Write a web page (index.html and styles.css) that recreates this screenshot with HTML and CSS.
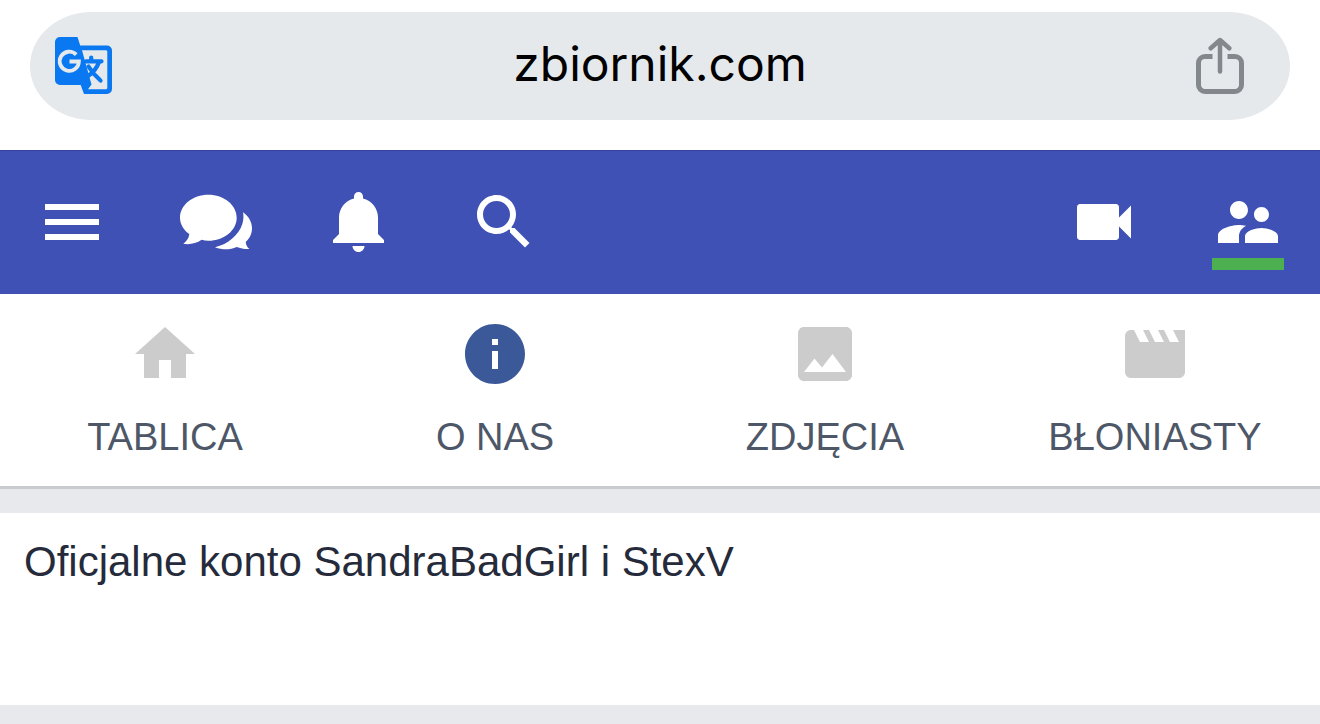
FILE: index.html
```html
<!DOCTYPE html>
<html lang="pl">
<head>
<meta charset="utf-8">
<meta name="viewport" content="width=device-width, initial-scale=1">
<title>zbiornik.com</title>
<link rel="stylesheet" href="styles.css">
</head>
<body>
<div class="browser-bar">
  <div class="address">
    <button class="address-button" type="button" aria-label="Translate">
      <svg class="translate-icon" viewBox="0 0 57 57" aria-hidden="true">
        <path fill="currentColor" fill-rule="evenodd" d="M5 0H22.500L25.200 8.600H52A5 5 0 0 1 57 13.600V52A5 5 0 0 1 52 57H29L25.700 48H5A5 5 0 0 1 0 43V5A5 5 0 0 1 5 0ZM27 13.300L36.500 47.500L33 52.300H51.300L52.300 51.300V14.300L51.300 13.300Z"/>
        <path class="line" stroke-width="4.200" d="M31 24.300H46.500M36.200 20.500V24M43.800 25.500Q41 33.500 33 39M33.500 29.500Q38 37 45.500 43.500"/>
        <path class="cutout" stroke-width="3.800" d="M21.200 17.600A9.600 9.600 0 1 0 23.900 24.500H14.500"/>
      </svg>
    </button>
    <span class="host">zbiornik.com</span>
    <button class="address-button share" type="button" aria-label="Share">
      <svg class="share-icon" viewBox="0 0 48 57" aria-hidden="true">
        <path class="line butt" stroke-width="5" d="M16.500 19.500H9A6.500 6.500 0 0 0 2.500 26V48A6.500 6.500 0 0 0 9 54.500H39A6.500 6.500 0 0 0 45.500 48V26A6.500 6.500 0 0 0 39 19.500H31.500"/>
        <path class="line" stroke-width="4.500" d="M24 3.500V34.500M14.700 11.300L24 3L33.300 11.300"/>
      </svg>
    </button>
  </div>
</div>

<header class="header">
  <button class="header-button" type="button" aria-label="Menu">
    <svg class="icon" viewBox="0 0 24 24" aria-hidden="true"><path d="M3 18h18v-2H3v2zm0-5h18v-2H3v2zm0-7v2h18V6H3z"/></svg>
  </button>
  <button class="header-button" type="button" aria-label="Wiadomości">
    <svg class="icon" viewBox="0 0 72 72" aria-hidden="true">
      <path d="M28.300 8.700C44 8.700 56.700 19 56.700 31.700S44 54.700 28.300 54.700Q24.800 54.700 21.700 53.800C16 57.500 10 58.800 3.300 57.800C6.500 55.500 9 52 9.300 48C3.500 44 0 38 0 31.700C0 19 12.700 8.700 28.300 8.700Z"/>
      <path d="M63 26.300C68.500 30 72 36 72 42.300C72 47.500 69.800 52.500 65.700 56C66 59 67.300 61.500 69.500 63C65 63.300 60.800 62.500 56.700 61C49.500 64.200 42 63.800 35 61.200C48 58.500 59 48.500 62.300 38C63.500 34 63.800 30 63 26.300Z"/>
    </svg>
  </button>
  <button class="header-button" type="button" aria-label="Powiadomienia">
    <svg class="icon" viewBox="0 0 24 24" aria-hidden="true"><path d="M11.5 22c1.1 0 2-.9 2-2h-4c0 1.100.9 2 2 2zm6.500-6v-5.500c0-3.070-2.130-5.640-5-6.320V3.500c0-.83-.67-1.500-1.500-1.500S10 2.670 10 3.500v.68c-2.870.68-5 3.250-5 6.320V16l-2 2v1h17v-1l-2-2z"/></svg>
  </button>
  <button class="header-button" type="button" aria-label="Szukaj">
    <svg class="icon" viewBox="0 0 24 24" aria-hidden="true"><path d="M15.500 14h-.79l-.28-.27C15.410 12.590 16 11.110 16 9.500 16 5.910 13.090 3 9.500 3S3 5.910 3 9.500 5.910 16 9.500 16c1.610 0 3.090-.59 4.230-1.570l.27.28v.79l5 4.990L20.490 19l-4.990-5zm-6 0C7.010 14 5 11.990 5 9.500S7.010 5 9.500 5 14 7.010 14 9.500 11.990 14 9.500 14z"/></svg>
  </button>
  <button class="header-button push" type="button" aria-label="Kamery">
    <svg class="icon" viewBox="0 0 24 24" aria-hidden="true"><path d="M17 10.500V7c0-.55-.45-1-1-1H4c-.55 0-1 .45-1 1v10c0 .55.45 1 1 1h12c.55 0 1-.45 1-1v-3.500l4 4v-11l-4 4z"/></svg>
  </button>
  <button class="header-button active" type="button" aria-label="Profil">
    <svg class="icon" viewBox="0 0 24 24" aria-hidden="true"><path d="M16.500 12c1.380 0 2.490-1.120 2.490-2.500S17.880 7 16.500 7C15.120 7 14 8.120 14 9.500s1.120 2.500 2.500 2.500zM9 11c1.660 0 2.990-1.340 2.990-3S10.660 5 9 5C7.340 5 6 6.340 6 8s1.340 3 3 3zm7.500 3c-1.830 0-5.500.92-5.500 2.750V19h11v-2.250c0-1.830-3.670-2.750-5.500-2.750zM9 13c-2.330 0-7 1.170-7 3.500V19h7v-2.250c0-.85.33-2.340 2.370-3.470C10.500 13.100 9.660 13 9 13z"/></svg>
  </button>
</header>

<nav class="tabs">
  <a class="tab" href="#tablica">
    <svg class="icon" viewBox="0 0 24 24" aria-hidden="true"><path d="M10 20v-6h4v6h5v-8h3L12 3 2 12h3v8z"/></svg>
    <span class="tab-label">TABLICA</span>
  </a>
  <a class="tab current" href="#o-nas" aria-current="page">
    <svg class="icon" viewBox="0 0 24 24" aria-hidden="true"><path d="M12 2C6.480 2 2 6.480 2 12s4.480 10 10 10 10-4.480 10-10S17.520 2 12 2zm1 15h-2v-6h2v6zm0-8h-2V7h2v2z"/></svg>
    <span class="tab-label">O NAS</span>
  </a>
  <a class="tab" href="#zdjecia">
    <svg class="icon" viewBox="0 0 24 24" aria-hidden="true"><path d="M21 19V5c0-1.100-.9-2-2-2H5c-1.100 0-2 .9-2 2v14c0 1.100.9 2 2 2h14c1.100 0 2-.9 2-2zM8.500 13.500l2.500 3.010L14.500 12l4.500 6H5l3.500-4.500z"/></svg>
    <span class="tab-label">ZDJĘCIA</span>
  </a>
  <a class="tab" href="#bloniasty">
    <svg class="icon" viewBox="0 0 24 24" aria-hidden="true"><path d="M18 4l2 4h-3l-2-4h-2l2 4h-3l-2-4H8l2 4H7L5 4H4c-1.100 0-1.990.9-1.990 2L2 18c0 1.100.9 2 2 2h16c1.100 0 2-.9 2-2V4h-4z"/></svg>
    <span class="tab-label">BŁONIASTY</span>
  </a>
</nav>

<main class="about">
  <p class="about-text">Oficjalne konto SandraBadGirl i StexV</p>
</main>
</body>
</html>
```

FILE: styles.css
```css
* {
  box-sizing: border-box;
}

body {
  margin: 0;
  background: #e8e9ed;
  color: #252b3a;
  font-family: "Liberation Sans", Arial, sans-serif;
}

button {
  padding: 0;
  border: 0;
  background: none;
  color: inherit;
  font: inherit;
}

svg {
  display: block;
}

.browser-bar {
  padding: 12px 30px 30px;
  background: #fff;
}

.address {
  display: grid;
  grid-template-columns: 1fr auto 1fr;
  align-items: center;
  height: 108px;
  padding: 0 46px 1px 25px;
  border-radius: 62px / 54px;
  background: #e6e9ec;
  color: #000;
}

.address-button {
  justify-self: start;
  color: #0a78f0;
}

.address-button.share {
  justify-self: end;
  color: #82888c;
}

.translate-icon {
  width: 57px;
  height: 57px;
}

.share-icon {
  width: 48px;
  height: 57px;
}

.line,
.cutout {
  fill: none;
  stroke: currentColor;
  stroke-linecap: round;
  stroke-linejoin: round;
}

.line.butt,
.cutout {
  stroke-linecap: butt;
}

.cutout {
  stroke: #e6e9ec;
  stroke-linejoin: miter;
}

.host {
  padding: 0 0 3px 21px;
  font-family: Inter, sans-serif;
  font-size: 48px;
  line-height: 60px;
}

.header {
  display: flex;
  align-items: flex-start;
  gap: 72px;
  height: 144px;
  padding: 35px 36px 0;
  border-top: 1px solid #34439c;
  background: #3f51b5;
  color: #fff;
}

.icon {
  width: 72px;
  height: 72px;
  fill: currentColor;
}

.push {
  margin-left: auto;
}

.header-button.active {
  border-bottom: 12px solid #4caf50;
}

.tabs {
  display: grid;
  grid-template-columns: repeat(4, 1fr);
  border-bottom: 3px solid #c8cacd;
  background: #fff;
}

.tab {
  display: flex;
  flex-direction: column;
  align-items: center;
  gap: 20px;
  padding: 24px 0 22px;
  color: #ccc;
  text-decoration: none;
}

.tab.current {
  color: #3b5998;
}

.tab-label {
  color: #4d5768;
  font-size: 38px;
  line-height: 54px;
}

.about {
  min-height: 192px;
  margin-top: 24px;
  padding: 24px;
  background: #fff;
}

.about-text {
  margin: 0;
  font-size: 42px;
  line-height: 50px;
}
```
